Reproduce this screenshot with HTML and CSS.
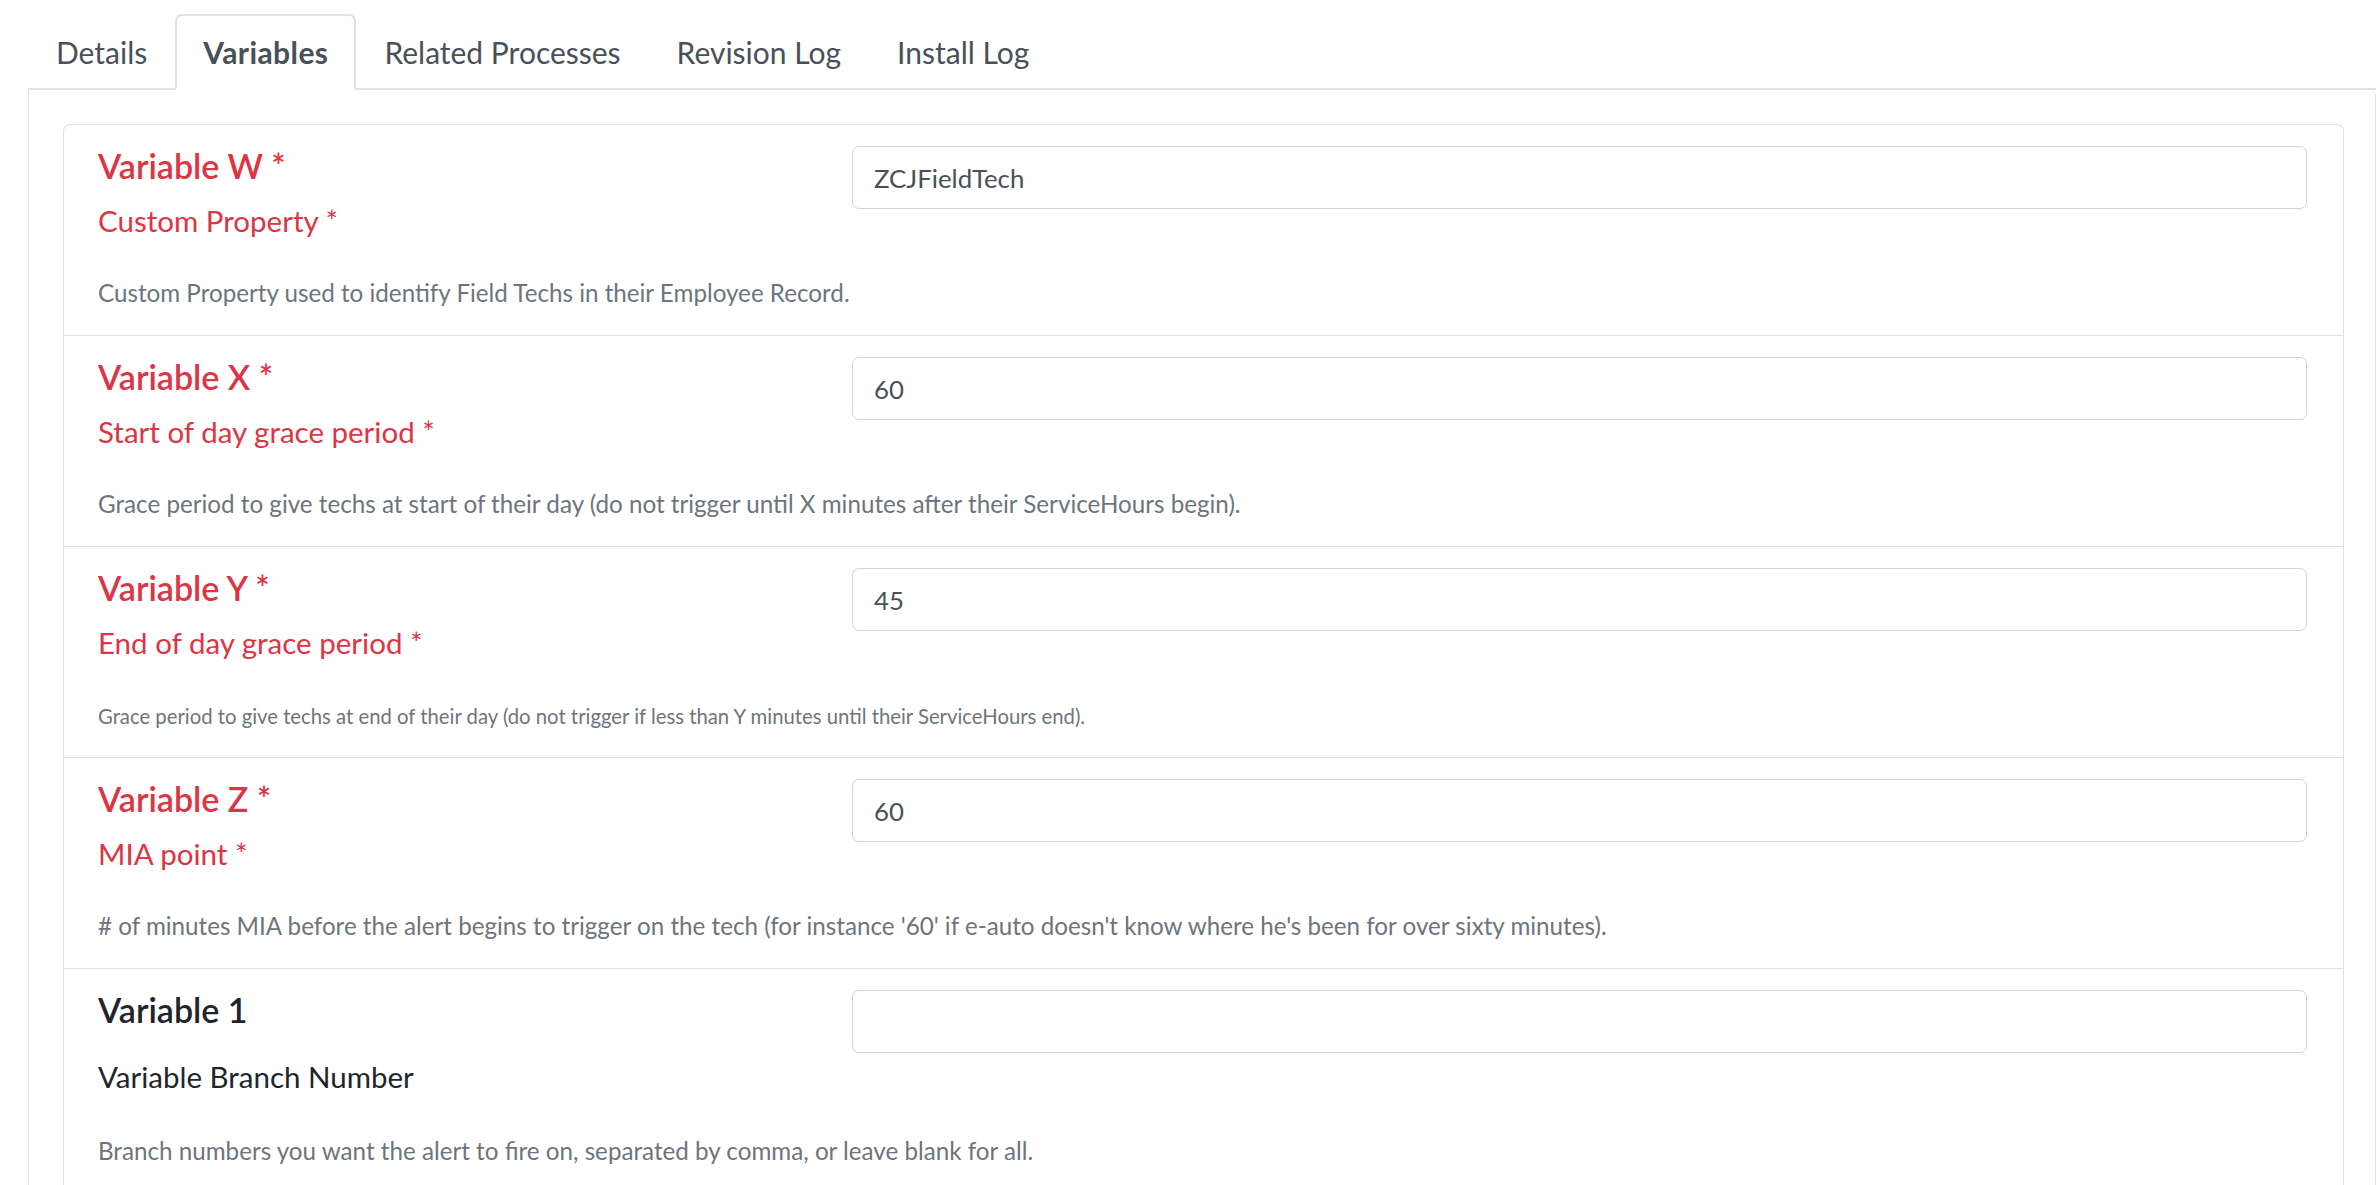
FILE: index.html
```html
<!DOCTYPE html>
<html lang="en">
<head>
<meta charset="utf-8">
<title>Variables</title>
<link rel="stylesheet" href="styles.css">
</head>
<body>
<div class="page">
  <ul class="tabs">
    <li class="tab">Details</li>
    <li class="tab active">Variables</li>
    <li class="tab">Related Processes</li>
    <li class="tab">Revision Log</li>
    <li class="tab">Install Log</li>
  </ul>
  <div class="panel">
    <div class="card">
      <div class="var-row">
        <div class="var-top">
          <div class="var-labels">
            <div class="var-name req">Variable W *</div>
            <div class="var-title req">Custom Property *</div>
          </div>
          <input class="field" type="text" value="ZCJFieldTech">
        </div>
        <p class="var-desc">Custom Property used to identify Field Techs in their Employee Record.</p>
      </div>
      <div class="var-row">
        <div class="var-top">
          <div class="var-labels">
            <div class="var-name req">Variable X *</div>
            <div class="var-title req">Start of day grace period *</div>
          </div>
          <input class="field" type="text" value="60">
        </div>
        <p class="var-desc">Grace period to give techs at start of their day (do not trigger until X minutes after their ServiceHours begin).</p>
      </div>
      <div class="var-row">
        <div class="var-top">
          <div class="var-labels">
            <div class="var-name req">Variable Y *</div>
            <div class="var-title req">End of day grace period *</div>
          </div>
          <input class="field" type="text" value="45">
        </div>
        <p class="var-desc"><small class="desc-small">Grace period to give techs at end of their day (do not trigger if less than Y minutes until their ServiceHours end).</small></p>
      </div>
      <div class="var-row">
        <div class="var-top">
          <div class="var-labels">
            <div class="var-name req">Variable Z *</div>
            <div class="var-title req">MIA point *</div>
          </div>
          <input class="field" type="text" value="60">
        </div>
        <p class="var-desc"># of minutes MIA before the alert begins to trigger on the tech (for instance '60' if e-auto doesn't know where he's been for over sixty minutes).</p>
      </div>
      <div class="var-row var-row-last">
        <div class="var-top">
          <div class="var-labels">
            <div class="var-name">Variable 1</div>
            <div class="var-title var-title-plain">Variable Branch Number</div>
          </div>
          <input class="field" type="text" value="">
        </div>
        <p class="var-desc var-desc-last">Branch numbers you want the alert to fire on, separated by comma, or leave blank for all.</p>
      </div>
    </div>
  </div>
</div>
</body>
</html>
```

FILE: styles.css
```css
* {
  box-sizing: border-box;
}

html, body {
  margin: 0;
  padding: 0;
  background: #ffffff;
  font-family: "Lato", "Noto Sans", sans-serif;
  color: #212529;
  overflow: hidden;
}

.page {
  padding: 14px 0 0 28px;
}

.tabs {
  display: flex;
  margin: 0;
  padding: 0;
  list-style: none;
  border-bottom: 2px solid #dee2e6;
}

.tab {
  height: 76px;
  margin-bottom: -2px;
  padding: 2px 26px 0;
  border: 2px solid transparent;
  border-top-left-radius: 7px;
  border-top-right-radius: 7px;
  font-size: 30px;
  line-height: 68px;
  color: #495057;
}

.tab.active {
  font-weight: 700;
  letter-spacing: 0.4px;
  background: #ffffff;
  border-color: #dee2e6 #dee2e6 #ffffff;
}

.panel {
  padding: 34px 31px 0 34px;
  border-left: 1px solid #dee2e6;
  border-right: 1px solid #dee2e6;
  border-top-right-radius: 6px;
}

.card {
  border: 1px solid #dfdfdf;
  border-bottom: none;
  border-radius: 7px 7px 0 0;
  background: #ffffff;
}

.var-row {
  height: 211px;
  padding: 22px 36px 0 34px;
  border-bottom: 1px solid #dfdfdf;
}

.var-row-last {
  height: auto;
  padding-bottom: 22px;
  border-bottom: none;
}

.var-top {
  display: grid;
  grid-template-columns: 754px 1fr;
  align-items: start;
}

.var-name {
  margin-top: -1px;
  font-size: 34px;
  font-weight: 600;
  line-height: 40px;
  color: #212529;
}

.var-title {
  margin-top: 14px;
  font-size: 29.5px;
  line-height: 42px;
  color: #212529;
}

.var-title-plain {
  margin-top: 26px;
}

.req {
  color: #dc3545;
}

.field {
  display: block;
  width: 100%;
  height: 63px;
  margin-top: -1px;
  padding: 0 21px;
  border: 1px solid #ced4da;
  border-radius: 7px;
  background: #ffffff;
  font-family: "Lato", "Noto Sans", sans-serif;
  font-size: 25.8px;
  color: #495057;
  outline: none;
}

.var-desc {
  margin: 33px 0 0;
  font-size: 24.2px;
  line-height: 36px;
  color: #6c757d;
}

.var-desc-last {
  margin-top: 35px;
}

.desc-small {
  font-size: 20.3px;
}
```
